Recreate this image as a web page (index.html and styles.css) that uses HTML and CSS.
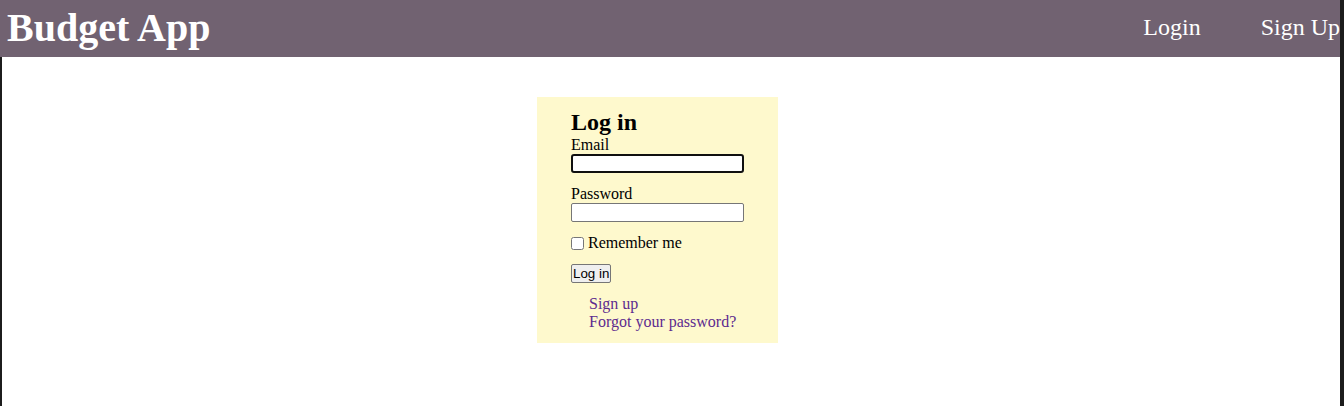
FILE: index.html
```html
<!DOCTYPE html>
<html>
<head>
<meta charset="utf-8">
<title>Budget App</title>
<link rel="stylesheet" href="styles.css">
</head>
<body>
<div class="page">
  <header class="topbar">
    <h1 class="brand">Budget App</h1>
    <nav class="nav">
      <a class="nav-link" href="#">Login</a>
      <a class="nav-link" href="#">Sign Up</a>
    </nav>
  </header>
  <main class="main">
    <section class="card">
      <h2 class="card-title">Log in</h2>
      <form class="form">
        <div class="field">
          <label class="label" for="email">Email</label>
          <input class="input input-focus" id="email" type="email">
        </div>
        <div class="field">
          <label class="label" for="password">Password</label>
          <input class="input" id="password" type="password">
        </div>
        <div class="check-row">
          <input class="checkbox" id="remember" type="checkbox">
          <label class="label" for="remember">Remember me</label>
        </div>
        <div class="actions">
          <input class="btn" type="submit" value="Log in">
        </div>
      </form>
      <div class="links">
        <a class="link" href="#">Sign up</a>
        <a class="link" href="#">Forgot your password?</a>
      </div>
    </section>
  </main>
</div>
</body>
</html>
```
FILE: styles.css
```css
html, body {
  margin: 0;
  padding: 0;
}
body {
  background: #1c1c1c;
  font-family: "Liberation Serif", "Times New Roman", serif;
  height: 406px;
  overflow: hidden;
}
.page {
  width: 1340px;
  height: 406px;
  display: flex;
  flex-direction: column;
}
.topbar {
  height: 57px;
  background: #716271;
  display: flex;
  align-items: center;
  justify-content: space-between;
  overflow: hidden;
}
.brand {
  margin: 0 0 0 7px;
  color: #ffffff;
  font-size: 40px;
  font-weight: bold;
  line-height: 1;
  padding-bottom: 2px;
}
.nav {
  display: flex;
  gap: 60px;
  margin-right: 0;
  padding-bottom: 2px;
}
.nav-link {
  color: #ffffff;
  font-size: 24px;
  text-decoration: none;
  white-space: nowrap;
}
.main {
  flex: 1;
  margin-left: 2px;
  background: #ffffff;
  padding-top: 40px;
}
.card {
  margin-left: 535px;
  width: 241px;
  height: 246px;
  box-sizing: border-box;
  background: #fef9cd;
  padding: 11px 20px 0 34px;
}
.card-title {
  margin: 0;
  font-size: 24px;
  font-weight: bold;
  line-height: 28px;
  color: #000;
}
.form {
  display: flex;
  flex-direction: column;
}
.field {
  display: flex;
  flex-direction: column;
  align-items: flex-start;
  margin-bottom: 12px;
}
.label {
  font-size: 16px;
  line-height: 18px;
  color: #000;
}
.input {
  width: 173px;
  height: 19px;
  box-sizing: border-box;
  margin: 0;
  border: 1px solid #767676;
  border-radius: 2px;
  background: #fff;
  padding: 1px 2px;
}
.input-focus {
  border: 2px solid #101010;
  border-radius: 3px;
}
.check-row {
  display: flex;
  align-items: center;
  gap: 4px;
  margin-bottom: 12px;
}
.checkbox {
  margin: 0;
  width: 13px;
  height: 13px;
}
.actions {
  display: flex;
}
.btn {
  margin: 0;
  font-family: "Liberation Sans", Arial, sans-serif;
  font-size: 13.33px;
  height: 19px;
  padding: 0 1px;
  border: 1px solid #767676;
  border-radius: 2px;
  background: #efefef;
  color: #000;
}
.links {
  display: flex;
  flex-direction: column;
  align-items: flex-start;
  padding-left: 18px;
  margin-top: 12px;
}
.link {
  color: #5d2b8f;
  font-size: 16px;
  line-height: 18px;
  text-decoration: none;
}
```
